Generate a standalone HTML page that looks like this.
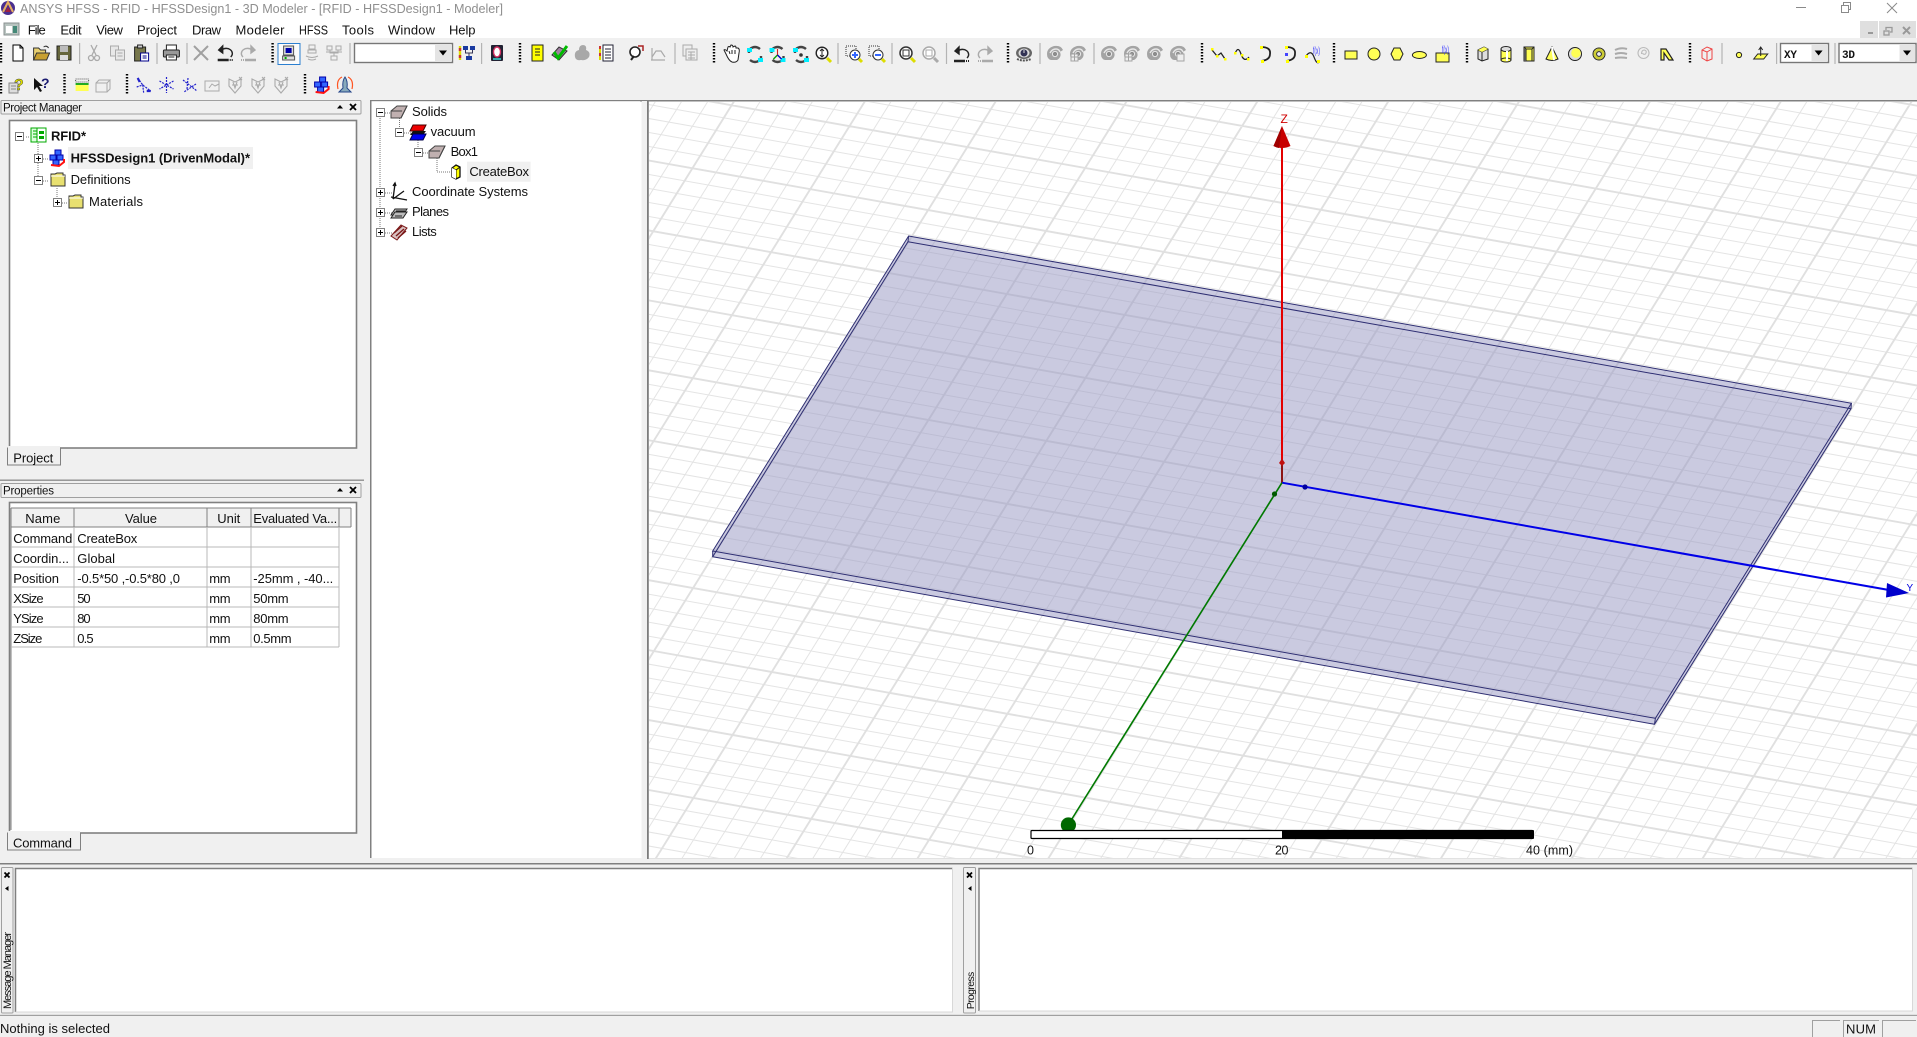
<!DOCTYPE html>
<html><head><meta charset="utf-8"><title>ANSYS HFSS</title>
<style>
html,body{margin:0;padding:0;background:#f0f0f0;overflow:hidden}
svg{display:block;position:absolute;left:0;top:0}
text{font-family:"Liberation Sans",Arial,sans-serif;font-size:13px;fill:#111}
.m{font-family:"Liberation Mono",monospace;font-size:12px;font-weight:bold}
.b{font-weight:bold}
.e{stroke:#808080;stroke-width:1;fill:#fff;shape-rendering:crispEdges}
.d{stroke:#777;stroke-width:1;stroke-dasharray:1 1;fill:none;shape-rendering:crispEdges}
</style></head><body>
<svg width="1917" height="1037" viewBox="0 0 1917 1037" xmlns="http://www.w3.org/2000/svg">
<defs>
<clipPath id="vp"><rect x="649" y="102" width="1268" height="756"/></clipPath>
<g id="new"><path d="M-5-8H2L5-5V8H-5Z" fill="#fff" stroke="#000"/><path d="M2-8V-5H5" fill="none" stroke="#000"/></g>
<g id="open" stroke="#333"><path d="M-8 7V-5H-3L-1-3H4V0" fill="#e8d070"/><path d="M-8 7L-5 0H8L5 7Z" fill="#c8a030"/><path d="M2-6Q5-8 7-5" fill="none"/></g>
<g id="save"><rect x="-7" y="-7" width="14" height="14" fill="#66663c" stroke="#222"/><rect x="-4" y="-7" width="8" height="6" fill="#bbb"/><rect x="-4" y="2" width="8" height="5" fill="#ddd"/></g>
<g id="cut" stroke="#aaa" fill="none" stroke-width="1.3"><path d="M-3-8L2 2M3-8L-2 2"/><circle cx="-3" cy="5" r="2.5"/><circle cx="3" cy="5" r="2.5"/></g>
<g id="copy" stroke="#aaa" fill="#e8e8e8"><rect x="-7" y="-7" width="8" height="10"/><rect x="-2" y="-3" width="9" height="10"/><path d="M0 0H5M0 3H5" fill="none"/></g>
<g id="paste"><rect x="-7" y="-6" width="11" height="14" fill="#77774c" stroke="#222"/><rect x="-4" y="-8" width="5" height="3" fill="#ccc" stroke="#222"/><rect x="-1" y="0" width="8" height="8" fill="#fff" stroke="#00008b"/><path d="M1 3H5M1 5H5" stroke="#00008b"/></g>
<g id="print" stroke="#222"><path d="M-5-3V-8H5V-3" fill="#fff"/><rect x="-8" y="-3" width="16" height="7" rx="1" fill="#999"/><rect x="-5" y="2" width="10" height="5" fill="#fff"/><path d="M-3 4H3" /></g>
<g id="del"><path d="M-7-7L7 7M7-7L-7 7" stroke="#a0a0a0" stroke-width="2"/></g>
<g id="undo" fill="none" stroke="#222" stroke-width="1.4"><path d="M-4-3A6 5 0 1 1 5 4"/><path d="M-7-3L-3-7V0Z" fill="#222"/><path d="M-8 7H3" stroke-width="2.5"/><path d="M4 7H8" stroke-dasharray="1 1" stroke-width="2"/></g>
<g id="redo" fill="none" stroke="#aaa" stroke-width="1.4"><path d="M4-3A6 5 0 1 0-5 4"/><path d="M7-3L3-7V0Z" fill="#aaa"/><path d="M8 7H-3" stroke-width="2.5"/><path d="M-4 7H-8" stroke-dasharray="1 1" stroke-width="2"/></g>
<g id="comp"><rect x="-5" y="-7" width="10" height="9" fill="#ddd" stroke="#555"/><rect x="-3" y="-5" width="6" height="5" fill="#0000a8"/><rect x="-6" y="3" width="12" height="4" fill="#ddd" stroke="#555"/><rect x="-4" y="4" width="2" height="2" fill="#0a0"/></g>
<g id="net1" fill="none" stroke="#aaa"><rect x="-3" y="-8" width="6" height="4"/><rect x="-4" y="-3" width="8" height="3"/><path d="M-6 3Q0 6 6 3M-4 6Q0 8 4 6"/></g>
<g id="net2" fill="none" stroke="#aaa"><rect x="-7" y="-7" width="5" height="4"/><rect x="2" y="-7" width="5" height="4"/><rect x="-3" y="3" width="6" height="4"/><path d="M-4-3V0H4V-3M0 0V3M-8-1H8"/></g>
<g id="tree"><path d="M-7-7V7" stroke="#dd0" stroke-width="2.4"/><path d="M-7-5V-2M-7 2V5" stroke="#c33" stroke-width="2.4"/><rect x="-4" y="-7" width="5" height="4" fill="#1a3aa0"/><rect x="3" y="-7" width="5" height="4" fill="#1a3aa0"/><path d="M-1.500-3V0H5.500V-3M2 0V3" fill="none" stroke="#335"/><rect x="-1" y="3" width="6" height="4" fill="#1a3aa0"/></g>
<g id="q"><rect x="-6" y="-8" width="12" height="16" fill="#223" rx="1"/><ellipse cx="0" cy="-1" rx="3.500" ry="5" fill="#fff" stroke="#d03060" stroke-width="1.400"/><rect x="-4" y="5" width="8" height="2" fill="#3aa"/></g>
<g id="ydoc"><rect x="-5" y="-8" width="11" height="16" fill="#ff0" stroke="#222"/><path d="M-2-4H3M-2-1H3M-2 2H3" stroke="#222"/></g>
<g id="check"><path d="M-7 2L0-6 8-2 0 7Z" fill="#a080a0" stroke="#333"/><path d="M-5-1L-1 5 8-7" fill="none" stroke="#0b0" stroke-width="3"/></g>
<g id="blob"><path d="M-7 4Q-8-2-3-3Q-3-8 1-8Q5-8 4-3Q9-1 7 4Q4 8-1 7Q-6 8-7 4Z" fill="#a8a8a8"/></g>
<g id="doc2"><rect x="-3" y="-8" width="10" height="16" fill="#fff" stroke="#223"/><path d="M-1-4H5M-1-1H5M-1 2H5M-1 5H5" stroke="#223"/><path d="M-6-7V7" stroke="#dd0" stroke-width="2"/><path d="M-6-7V-4M-6 0V3" stroke="#c33" stroke-width="2"/></g>
<g id="mag"><circle cx="-1" cy="-2" r="5" fill="#fff" stroke="#222" stroke-width="1.600"/><path d="M-5 6L-2 2" stroke="#222" stroke-width="2"/><path d="M2-8H7V-3" fill="none" stroke="#a22" stroke-width="1.500"/></g>
<g id="curve" fill="none" stroke="#aaa"><path d="M-7 6H7M-6 6V-6M-6 3L-2-3 3-3 7 3" stroke-width="1.200"/></g>
<g id="calc" stroke="#aaa" fill="#eee"><rect x="-7" y="-8" width="9" height="11"/><rect x="-4" y="-4" width="11" height="11"/><path d="M-2-1H5M-2 2H5M-2 5H5M1-1V7" fill="none"/></g>
<g id="hand"><path d="M-6 0L-8-4Q-7-5-5-3L-4-7Q-3-8-2-7L-1-9Q1-9 1-7L3-8Q4-8 4-6L6-6Q8-5 7-1L6 6Q4 9 0 8Q-3 7-6 0Z" fill="#fff" stroke="#222"/><path d="M-3-3L-2 0M0-4V0M3-4V0" stroke="#222"/></g>
<g id="rot" fill="none" stroke="#444" stroke-width="2.400"><path d="M-5-5Q0-9 5-5M-5 6Q0 10 5 6"/><path d="M-6-5V-1M6 6V2" stroke="#444"/><rect x="-8" y="-6" width="5" height="4" fill="#0ef" stroke="none"/><rect x="3" y="4" width="5" height="4" fill="#0ef" stroke="none"/></g>
<g id="rot2"><use href="#rot"/><path d="M0-5V1M0 1L-4 5M0 1L4 5" stroke="#c22" stroke-width="1.100" fill="none"/><path d="M-4 5L0 1" stroke="#0a0" stroke-width="1.300"/><path d="M4 5L0 1" stroke="#00c" stroke-width="1.300"/></g>
<g id="rot3"><use href="#rot"/><circle cx="0" cy="1" r="1.800" fill="#333"/></g>
<g id="zf"><circle cx="-1" cy="-1" r="5.800" fill="#fff" stroke="#222" stroke-width="1.400"/><path d="M-1-5V3M-3-3L-1-5 1-3M-3 1L-1 3 1 1" fill="none" stroke="#222"/><path d="M4 4L8 8" stroke="#dd0" stroke-width="3"/></g>
<g id="zi"><rect x="-8" y="-8" width="10" height="10" fill="none" stroke="#333" stroke-dasharray="1 1"/><circle cx="1" cy="1" r="5" fill="#fff" stroke="#333"/><path d="M-2 1H4M1-2V4" stroke="#36f" stroke-width="2"/><path d="M5 5L8 8" stroke="#dd0" stroke-width="3"/></g>
<g id="zo"><rect x="-8" y="-8" width="10" height="10" fill="none" stroke="#333" stroke-dasharray="1 1"/><circle cx="1" cy="1" r="5" fill="#fff" stroke="#333"/><path d="M-2 1H4" stroke="#36f" stroke-width="2"/><path d="M5 5L8 8" stroke="#dd0" stroke-width="3"/></g>
<g id="zq"><circle cx="-1" cy="-1" r="6" fill="#fff" stroke="#333" stroke-width="1.500"/><rect x="-4" y="-4" width="6" height="6" fill="none" stroke="#333"/><path d="M4 4L8 8" stroke="#dd0" stroke-width="3"/></g>
<g id="zq2"><circle cx="-1" cy="-1" r="6" fill="#fff" stroke="#aaa" stroke-width="1.500"/><rect x="-4" y="-4" width="6" height="6" fill="none" stroke="#aaa"/><path d="M4 4L8 8" stroke="#aaa" stroke-width="3"/></g>
<g id="eye"><ellipse cx="0" cy="-1" rx="8" ry="6" fill="#666"/><ellipse cx="0" cy="-1" rx="5.500" ry="4.500" fill="#ddd"/><circle cx="0" cy="-1" r="3.500" fill="#335"/><path d="M0-1V-4" stroke="#ddd"/><path d="M-7 5Q0 8 7 5" stroke="#555" stroke-width="2" stroke-dasharray="2 1" fill="none"/></g>
<g id="ge"><path d="M-8 1Q-8-5-1-7Q6-8 8-3L5-1Q7 4 2 7H-4Q-8 6-8 1Z" fill="#a4a4a4"/><path d="M-5 0Q-3-4 1-4Q4-4 5-1" fill="none" stroke="#e8e8e8" stroke-width="1.400"/><circle cx="0" cy="1" r="2.600" fill="#8c8c8c" stroke="#e8e8e8"/></g>
<g id="ge2"><use href="#ge"/><rect x="-7" y="1" width="7" height="7" fill="#eee" stroke="#a4a4a4"/><path d="M-7 4H0M-3.500 1V8" stroke="#a4a4a4"/></g>
<g id="ge3"><use href="#ge"/><rect x="-1" y="1" width="7" height="7" fill="#eee" stroke="#a4a4a4"/></g>
<g id="c1"><path d="M-7-4L-2 2 2-1 6 5" fill="none" stroke="#222" stroke-width="1.300"/><g fill="#ff0"><rect x="-8" y="-6" width="2.500" height="2.500"/><rect x="-3" y="1" width="2.500" height="2.500"/><rect x="5" y="4" width="2.500" height="2.500"/></g></g>
<g id="c2"><path d="M-7 0Q-4-9-1 0T7 3" fill="none" stroke="#222" stroke-width="1.300"/><g fill="#ff0"><rect x="-8" y="-2" width="2.500" height="2.500"/><rect x="-1" y="0" width="2.500" height="2.500"/><rect x="5" y="4" width="2.500" height="2.500"/></g></g>
<g id="c3"><path d="M-4-7Q6-7 5 0Q5 6-4 7" fill="none" stroke="#222" stroke-width="1.800"/><rect x="-5" y="-8" width="3" height="3" fill="#ff0"/><rect x="-4" y="6" width="3" height="3" fill="#ff0"/></g>
<g id="c4"><path d="M-4-7Q6-7 5 0Q5 6-4 7" fill="none" stroke="#222" stroke-width="1.800"/><rect x="-5" y="-1" width="3" height="3" fill="#44f"/><rect x="-5" y="-8" width="3" height="3" fill="#ff0"/><rect x="-4" y="6" width="3" height="3" fill="#ff0"/></g>
<g id="c5"><path d="M-7 1Q-2-6 1 2T6 7" fill="none" stroke="#222" stroke-width="1.200"/><rect x="-8" y="0" width="3" height="3" fill="#ff0"/><rect x="4" y="5" width="3" height="3" fill="#ff0"/><text x="0" y="-1" textLength="7" lengthAdjust="spacingAndGlyphs" style="font-size:10px;fill:#33f">f(x)</text></g>
<g id="s1"><rect x="-6" y="-4" width="12" height="8" fill="#ff5" stroke="#222"/></g>
<g id="s2"><circle r="6" fill="#ff5" stroke="#222"/></g>
<g id="s3"><path d="M-3-6H3L6 0 3 6H-3L-6 0Z" fill="#ff5" stroke="#222"/></g>
<g id="s4"><ellipse rx="7" ry="3.500" fill="#ff5" stroke="#222"/></g>
<g id="s5"><rect x="-7" y="-2" width="13" height="9" fill="#ff5" stroke="#222"/><text x="-1" y="-2" textLength="7" lengthAdjust="spacingAndGlyphs" style="font-size:10px;fill:#33f">f(x)</text></g>
<g id="b1"><path d="M-5-4L1-7 5-5V5L-1 7-5 5Z" fill="#ddd" stroke="#222"/><path d="M-5-4L-1-2 5-5M-1-2V7" fill="none" stroke="#222"/><path d="M-1-2L5-5 1-7-5-4Z" fill="#ff5"/></g>
<g id="b2"><rect x="-5" y="-5" width="10" height="11" fill="#ff5" stroke="#222"/><ellipse cy="-5" rx="5" ry="2.500" fill="#ddd" stroke="#222"/><ellipse cy="6" rx="5" ry="2" fill="#ff5" stroke="#222"/><path d="M1-3V7" stroke="#fff" stroke-width="2"/></g>
<g id="b3"><rect x="-5" y="-7" width="10" height="14" fill="#ff5" stroke="#222"/><path d="M-5-7L-3-5H3L5-7M-3-5V7M3-5V7" fill="none" stroke="#222"/><rect x="-5" y="-5" width="2" height="12" fill="#555"/></g>
<g id="b4"><path d="M0-7L6 5Q0 8-6 5Z" fill="#ff5" stroke="#222"/><path d="M0-7L2 6" stroke="#fff" stroke-width="2"/></g>
<g id="b5"><circle r="6.500" fill="#ddd" stroke="#222"/><circle cx="1" cy="-1" r="4.800" fill="#ff5"/></g>
<g id="b6"><circle r="6" fill="none" stroke="#222" stroke-width="1"/><circle r="4.200" fill="none" stroke="#cc3" stroke-width="2.600"/><circle r="2.400" fill="#eee" stroke="#222"/></g>
<g id="b7" fill="none" stroke="#aaa" stroke-width="2"><path d="M-6-4Q0-7 6-5M-6 0Q0-2 6 0M-6 4Q0 3 6 4"/></g>
<g id="b8" fill="none" stroke="#bbb" stroke-width="1.100"><circle r="5.500"/><path d="M-2 1Q-2-3 1-3Q4-2 2 1Q0 2-1 0"/></g>
<g id="b9"><path d="M-6 6V-5H-1L6 6H2L-3-1V6Z" fill="#ff5" stroke="#222" stroke-width="1.200"/></g>
<g id="rb" fill="none" stroke="#e44"><path d="M-5-4L0-7 5-5V5L0 7-5 4Z"/><path d="M-5-4L0-2 5-5M0-2V7"/></g>
<g id="dot"><circle r="2.600" fill="#ff5" stroke="#222"/></g>
<g id="pl"><path d="M-7 5L-3 0H7L3 5Z" fill="#ff5" stroke="#222"/><path d="M0-7V2M-3 0H3M-2-4L0-7 2-4" fill="none" stroke="#222"/></g>
<g id="hlp"><rect x="-8" y="-2" width="9" height="10" fill="#ddd" stroke="#888"/><path d="M-6 1H-1M-6 4H-1" stroke="#888"/><text x="-3" y="5" style="font-size:16px;font-weight:bold;fill:#dd0;stroke:#333;stroke-width:.4">?</text></g>
<g id="whats"><path d="M-7-7L-7 5-4 2-1 7 1 6-2 1 2 1Z" fill="#111"/><text x="0" y="3" style="font-size:14px;font-weight:bold;fill:#1a1a70">?</text></g>
<g id="ybox"><rect x="-6" y="-6" width="13" height="3" fill="none" stroke="#555" stroke-dasharray="1 1"/><rect x="-6" y="-2" width="13" height="2" fill="#2a2"/><rect x="-6" y="0" width="13" height="6" fill="#ff5"/></g>
<g id="gbox" fill="none" stroke="#aaa"><rect x="-7" y="-2" width="11" height="9"/><path d="M-7-2L-4-5H7L4-2M7-5V4L4 7"/></g>
<g id="ax" fill="none" stroke="#22c" stroke-width="1.200"><path d="M-6-7L-1 0 7 6M-7 2L-1 0 0 8" stroke-dasharray="2 1"/><path d="M-6-7L-4-3M7 6H3" stroke-width="2.200"/></g>
<g id="ax2" fill="none" stroke="#22c" stroke-width="1.200"><path d="M0-8V8M-7-4L7 4M7-4L-7 4" stroke-dasharray="2 1"/></g>
<g id="ax3" fill="none" stroke="#22c" stroke-width="1.200"><path d="M-7-5L7 6M-2-7L-3 4M6-1L-6 7" stroke-dasharray="2 1"/></g>
<g id="gax" fill="none" stroke="#aaa"><rect x="-7" y="-4" width="14" height="10"/><path d="M-3 3L0-1 3 1 7-1"/></g>
<g id="gs" fill="none" stroke="#aaa" stroke-width="1.100"><path d="M-6-6L0-3 6-6V1L0 8-6 1Z"/><path d="M-2-3L0 3 2-3M-3 0H3"/><path d="M4-8L7-5M7-8L4-5"/></g>
<g id="hf"><g stroke="#00a" fill="#36f"><rect x="-2" y="-8" width="6" height="5"/><rect x="-7" y="-3" width="6" height="5"/><rect x="0" y="-3" width="6" height="5"/><rect x="-4" y="2" width="6" height="5"/></g><path d="M-6 7L2 8 7 4V1" stroke="#f11" stroke-width="2" fill="none"/></g>
<g id="rocket"><path d="M-7 4Q-9-5-3-8M7 4Q9-5 3-8" fill="none" stroke="#f52" stroke-width="1.200"/><path d="M0-8Q3-4 2 3L6 7H-6L-2 3Q-3-4 0-8Z" fill="#8ab" stroke="#248"/></g>
<g id="rfid"><rect x="-7" y="-7" width="8" height="14" fill="#dfd" stroke="#0a0"/><rect x="-1" y="-7" width="9" height="14" fill="#fff" stroke="#0a0"/><rect x="1" y="-4" width="5" height="3" fill="#0a0"/><rect x="1" y="1" width="5" height="3" fill="#0a0"/><path d="M-5-4H-1M-5-1H-1M-5 2H-1" stroke="#0a0"/></g>
<g id="fold"><path d="M-7 7V-5H-3L-1-6H5V-4H7V7Z" fill="#e8e070" stroke="#333"/><path d="M-7-3H7" stroke="#fff"/></g>
<g id="sld"><path d="M-8 6V-1L-2-6H8L2 6Z" fill="#c0b0b0" stroke="#444"/><path d="M-8-1H3M3-1V-1" fill="none" stroke="#444"/><path d="M-8 6H2L8-6" fill="none" stroke="#444"/></g>
<g id="vac"><path d="M-8-1L-5-7H8L5-1Z" fill="#e00" stroke="#400"/><path d="M-8 3H5L8-1V-1H-5Z" fill="#111"/><path d="M-8 8L-5 2H8L5 8Z" fill="#00e" stroke="#004"/></g>
<g id="cb"><path d="M-4-4L0-7 4-5V5L0 7-4 5Z" fill="#ff0" stroke="#111" stroke-width="1.300"/><path d="M-4-4L0-2 4-5M0-2V7" fill="none" stroke="#111"/><path d="M-4-4V5L0 7V-2Z" fill="#fff"/></g>
<g id="cs" fill="none" stroke="#111" stroke-width="1.300"><path d="M-6 7L-4-8M-8 5L8 8M-6 7L5-1"/><path d="M-6-6L-4-9-3-6" /></g>
<g id="pln" fill="#bbb" stroke="#222"><path d="M-8 3L-4-3H8L4 3Z"/><path d="M-8 6L-4 0H8L4 6Z"/><path d="M-3-1H6M-4 4H3" stroke="#222"/></g>
<g id="lst" stroke="#7a1818" fill="#d8c0c0"><path d="M-8 4L2-7 8-4-2 8Z"/><path d="M-5 1L3-6M-3 4L5-3M-1 6L7-1" fill="none" stroke-width="1.400"/></g>
<g id="tri"><path d="M-4-2.500H4L0 2.500Z" fill="#000"/></g>
<g id="upx"><path d="M-3 1.500H3L0-2Z" fill="#000"/><path d="M10-3L16 3M16-3L10 3" stroke="#000" stroke-width="1.800"/></g>
</defs>

<rect width="1917" height="1037" fill="#f0f0f0"/>
<rect width="1917" height="38" fill="#fff"/>

<!-- title bar -->
<g><circle cx="8" cy="8" r="7" fill="#4a2f8f"/><path d="M3 12L8 2 13 12" fill="none" stroke="#e8b060" stroke-width="2"/><path d="M5 12L8 7 11 12" fill="#a02040"/></g>
<text x="20" y="13" textLength="483" lengthAdjust="spacingAndGlyphs" style="fill:#8f8f8f">ANSYS HFSS - RFID - HFSSDesign1 - 3D Modeler - [RFID - HFSSDesign1 - Modeler]</text>
<path d="M1796 7.500H1806" stroke="#8a8a8a" stroke-width="1"/>
<g fill="none" stroke="#8a8a8a"><rect x="1841.500" y="5.500" width="7" height="7" fill="#fff"/><path d="M1843.500 5V2.500H1850.500V9.500H1848.500"/></g>
<path d="M1887 3L1897 13M1897 3L1887 13" stroke="#8a8a8a" stroke-width="1"/>
<rect x="1860" y="21" width="18" height="17" fill="#dfdfdf"/><rect x="1879" y="21" width="18" height="17" fill="#dfdfdf"/><rect x="1897" y="21" width="19" height="17" fill="#dfdfdf"/>
<path d="M1868 33H1873" stroke="#999" stroke-width="2"/>
<g fill="none" stroke="#999" stroke-width="1.300"><rect x="1884" y="31" width="5" height="4"/><path d="M1886 30V27.500H1892V32H1890"/></g>
<path d="M1903 27L1910 34M1910 27L1903 34" stroke="#999" stroke-width="2"/>

<!-- menu -->
<g><rect x="4" y="23" width="15" height="12" fill="#b8c4c0" stroke="#8a9090"/><rect x="6" y="26" width="6" height="7" fill="#fff"/><rect x="13" y="26" width="4" height="7" fill="#487"/></g>
<g style="fill:#222">
<text x="27.700" y="34.300" textLength="18">File</text>
<text x="60.400" y="34.300" textLength="21.200">Edit</text>
<text x="96.300" y="34.300" textLength="26.600">View</text>
<text x="137" y="34.300" textLength="40">Project</text>
<text x="192" y="34.300" textLength="29">Draw</text>
<text x="235.500" y="34.300" textLength="49">Modeler</text>
<text x="299" y="34.300" textLength="29" lengthAdjust="spacingAndGlyphs">HFSS</text>
<text x="342" y="34.300" textLength="32">Tools</text>
<text x="388" y="34.300" textLength="47">Window</text>
<text x="449" y="34.300" textLength="26.500">Help</text>
</g>

<!-- toolbar grips -->
<g stroke="#000" stroke-width="2.400" stroke-dasharray="1.500 1.500" fill="none">
<path d="M1 43V63M272.600 43V63M520 43V63M714 43V63M1008 43V63M1202 43V63M1334 43V63M1467 43V63M1690 43V63"/>
<path d="M1 74V94M64.500 74V94M127 74V94M305 74V94"/>
</g>
<g stroke="#b4b4b4" stroke-width="1.200"><path d="M79.600 43V64M157 43V64M187 43V64M350 43V64M481.600 43V64M675 43V64M838 43V64M892 43V64M946.500 43V64M1040 43V64M1094 43V64M1722 43V64M1776.600 43V64M1835 43V64"/></g>

<!-- toolbar row 1 -->
<rect x="278" y="43.500" width="22" height="21" fill="#fbfbfb" stroke="#2b7fd0" stroke-width="1"/>
<use href="#new" x="18" y="53"/><use href="#open" x="41.600" y="53"/><use href="#save" x="64" y="53"/><use href="#cut" x="94" y="53"/><use href="#copy" x="117.500" y="53"/><use href="#paste" x="141.600" y="53"/><use href="#print" x="171.400" y="53"/><use href="#del" x="201" y="53"/><use href="#undo" x="225.700" y="53"/><use href="#redo" x="248" y="53"/>
<use href="#comp" x="288.600" y="53"/><use href="#net1" x="312" y="53"/><use href="#net2" x="334" y="53"/>
<rect x="354.500" y="43.500" width="98" height="19" fill="#fff" stroke="#777" stroke-width="1.400"/><rect x="435" y="45" width="17" height="16" fill="#e4e4e4"/><use href="#tri" x="443" y="53"/>
<use href="#tree" x="467" y="53"/><use href="#q" x="497" y="53"/><use href="#ydoc" x="537" y="53"/><use href="#check" x="559" y="53"/><use href="#blob" x="582" y="53"/><use href="#doc2" x="606" y="53"/><use href="#mag" x="636" y="54"/>
<use href="#curve" x="658" y="54"/><use href="#calc" x="690" y="53"/><use href="#hand" x="732" y="54"/><use href="#rot" x="755" y="54"/><use href="#rot2" x="777.500" y="54"/><use href="#rot3" x="801" y="54"/><use href="#zf" x="823" y="54"/>
<use href="#zi" x="854" y="54"/><use href="#zo" x="877" y="54"/><use href="#zq" x="907" y="54"/><use href="#zq2" x="930" y="54"/><use href="#undo" x="962" y="54"/><use href="#redo" x="985" y="54"/><use href="#eye" x="1024" y="54"/>
<use href="#ge" x="1055" y="53"/><use href="#ge2" x="1078" y="53"/><use href="#ge" x="1109" y="53"/><use href="#ge2" x="1132" y="53"/><use href="#ge" x="1155" y="53"/><use href="#ge3" x="1178" y="53"/>
<use href="#c1" x="1219" y="54"/><use href="#c2" x="1242" y="54"/><use href="#c3" x="1265" y="54"/><use href="#c4" x="1290" y="54"/><use href="#c5" x="1313" y="55"/>
<use href="#s1" x="1351" y="55"/><use href="#s2" x="1374" y="54"/><use href="#s3" x="1397" y="54"/><use href="#s4" x="1419.400" y="55"/><use href="#s5" x="1443" y="55"/>
<use href="#b1" x="1483" y="54"/><use href="#b2" x="1506" y="54"/><use href="#b3" x="1529" y="54"/><use href="#b4" x="1552" y="54"/><use href="#b5" x="1575" y="54"/><use href="#b6" x="1599" y="54"/><use href="#b7" x="1621" y="54"/><use href="#b8" x="1643.500" y="53"/><use href="#b9" x="1667" y="54"/>
<use href="#rb" x="1707" y="54"/><use href="#dot" x="1739" y="55"/><use href="#pl" x="1760.700" y="54"/>
<rect x="1780.500" y="43.500" width="48" height="19" fill="#fff" stroke="#777" stroke-width="1.400"/><rect x="1811.500" y="45" width="16.500" height="16" fill="#e4e4e4"/><use href="#tri" x="1818.600" y="53"/>
<text class="m" x="1784" y="58" textLength="13" style="font-size:11px">XY</text>
<rect x="1839" y="43.500" width="77" height="19" fill="#fff" stroke="#777" stroke-width="1.400"/><rect x="1899.500" y="45" width="16" height="16" fill="#e4e4e4"/><use href="#tri" x="1907" y="53"/>
<text class="m" x="1842" y="58" textLength="13" style="font-size:11px">3D</text>

<!-- toolbar row 2 -->
<use href="#hlp" x="17" y="85"/><use href="#whats" x="41" y="85"/><use href="#ybox" x="81.600" y="85"/><use href="#gbox" x="103" y="85"/><use href="#ax" x="143.700" y="85"/><use href="#ax2" x="166.500" y="85"/><use href="#ax3" x="190" y="85"/><use href="#gax" x="212" y="85"/><use href="#gs" x="235" y="85"/><use href="#gs" x="258" y="85"/><use href="#gs" x="281" y="85"/><use href="#hf" x="321.600" y="85"/><use href="#rocket" x="345" y="85"/>

<!-- project manager -->
<rect x="1" y="100.500" width="360" height="13.500" rx="1" fill="#f0f0f0" stroke="#a0a0a0"/>
<text x="3" y="111.500" textLength="79" style="font-size:11.500px">Project Manager</text>
<use href="#upx" x="340" y="107"/>
<rect x="9.500" y="120.500" width="347" height="327.500" fill="#fff" stroke="#808080" stroke-width="1.600"/>
<rect x="68" y="147" width="185" height="22" fill="#f0f0f0"/>
<path class="d" d="M38 143V180M57 188V204M26 137H30M43 159H48M43 181H49M62 203H67"/>
<rect class="e" x="15.500" y="132.500" width="8" height="8"/><path d="M17 136.500H22" stroke="#000"/>
<use href="#rfid" x="38" y="135"/>
<text class="b" x="51" y="140.300" textLength="35">RFID*</text>
<rect class="e" x="34.500" y="154.500" width="8" height="8"/><path d="M36 158.500H41M38.500 156V161" stroke="#000"/>
<use href="#hf" x="57" y="158"/>
<text class="b" x="70.600" y="162.300" textLength="179.400">HFSSDesign1 (DrivenModal)*</text>
<rect class="e" x="34.500" y="176.500" width="8" height="8"/><path d="M36 180.500H41" stroke="#000"/>
<use href="#fold" x="58" y="179"/>
<text x="70.600" y="184" textLength="60">Definitions</text>
<rect class="e" x="53.500" y="198.500" width="8" height="8"/><path d="M55 202.500H60M57.500 200V205" stroke="#000"/>
<use href="#fold" x="76" y="201"/>
<text x="89" y="206" textLength="54">Materials</text>
<rect x="7.500" y="448" width="53" height="17" fill="#f0f0f0" stroke="#808080"/><rect x="8" y="446" width="52" height="3" fill="#f0f0f0"/>
<text x="13.300" y="462.300" textLength="40">Project</text>

<!-- properties -->
<rect x="0" y="479.500" width="364" height="1.400" fill="#909090"/>
<rect x="1" y="483.500" width="360" height="14" rx="1" fill="#f0f0f0" stroke="#a0a0a0"/>
<text x="3" y="494.500" textLength="51" style="font-size:11.500px">Properties</text>
<use href="#upx" x="340" y="490"/>
<rect x="9.500" y="502.500" width="347" height="330.500" fill="#fff" stroke="#808080" stroke-width="1.600"/>
<rect x="11" y="508" width="340" height="19" fill="#f0f0f0"/>
<g stroke="#808080" stroke-width="1" shape-rendering="crispEdges"><path d="M11 508H351M11 508V830M74 508V527M207 508V527M251 508V527M339 508V527M351 508V527M11 527H351"/></g>
<g stroke="#b8b8b8" stroke-width="1" shape-rendering="crispEdges"><path d="M74 527V647M207 527V647M251 527V647M339 527V647M11 547H339M11 567H339M11 587H339M11 607H339M11 627H339M11 647H339"/></g>
<g transform="translate(0 -.4)">
<text x="25.300" y="523.300" textLength="35">Name</text><text x="125" y="523.300" textLength="32">Value</text><text x="217.300" y="523.300" textLength="23">Unit</text><text x="253.300" y="523.300" textLength="84">Evaluated Va...</text>
<text x="13.300" y="543.300" textLength="59">Command</text><text x="77.300" y="543.300" textLength="60">CreateBox</text>
<text x="13.300" y="563.300" textLength="55.700">Coordin...</text><text x="77.300" y="563.300" textLength="37.700">Global</text>
<text x="13.300" y="583.300" textLength="45.700">Position</text><text x="77.300" y="583.300" textLength="102.700">-0.5*50 ,-0.5*80 ,0</text><text x="209.300" y="583.300" textLength="21.300">mm</text><text x="253.300" y="583.300" textLength="80">-25mm , -40...</text>
<text x="13.300" y="603.300" textLength="30.300">XSize</text><text x="77.300" y="603.300" textLength="13.300">50</text><text x="209.300" y="603.300" textLength="21.300">mm</text><text x="253.300" y="603.300" textLength="35.300">50mm</text>
<text x="13.300" y="623.300" textLength="30.300">YSize</text><text x="77.300" y="623.300" textLength="13.300">80</text><text x="209.300" y="623.300" textLength="21.300">mm</text><text x="253.300" y="623.300" textLength="35.300">80mm</text>
<text x="13.300" y="643.300" textLength="29">ZSize</text><text x="77.300" y="643.300" textLength="16.300">0.5</text><text x="209.300" y="643.300" textLength="21.300">mm</text><text x="253.300" y="643.300" textLength="38.300">0.5mm</text>
</g>
<rect x="7.500" y="833" width="73" height="17" fill="#f0f0f0" stroke="#808080"/><rect x="8" y="831" width="72" height="3" fill="#f0f0f0"/>
<text x="13" y="847.500" textLength="59">Command</text>

<!-- tree panel -->
<rect x="371.500" y="100.500" width="270" height="757.500" fill="#fff"/>
<rect x="370" y="100" width="1.500" height="758" fill="#808080"/><rect x="370" y="100" width="272" height="1.200" fill="#808080"/>
<rect x="467" y="161.700" width="63.600" height="20" fill="#f0f0f0"/>
<path class="d" d="M380 118V227M399.500 118V128M418 138V148M437 158V172H451M385 113H392M404 133H411M423 153H430M385 193H392M385 213H392M385 233H392"/>
<rect class="e" x="376.500" y="108.500" width="8" height="8"/><path d="M378 112.500H383" stroke="#000"/>
<use href="#sld" x="399" y="112"/><text x="412" y="116" textLength="35">Solids</text>
<rect class="e" x="395.500" y="128.500" width="8" height="8"/><path d="M397 132.500H402" stroke="#000"/>
<use href="#vac" x="418" y="132"/><text x="430.600" y="136.200" textLength="45">vacuum</text>
<rect class="e" x="414.500" y="148.500" width="8" height="8"/><path d="M416 152.500H421" stroke="#000"/>
<use href="#sld" x="437" y="152"/><text x="450.600" y="156" textLength="27.400">Box1</text>
<use href="#cb" x="456" y="172"/><text x="469.400" y="176.200" textLength="59.600">CreateBox</text>
<rect class="e" x="376.500" y="188.500" width="8" height="8"/><path d="M378 192.500H383M380.500 190V195" stroke="#000"/>
<use href="#cs" x="399" y="192"/><text x="412" y="196.200" textLength="116">Coordinate Systems</text>
<rect class="e" x="376.500" y="208.500" width="8" height="8"/><path d="M378 212.500H383M380.500 210V215" stroke="#000"/>
<use href="#pln" x="399" y="212"/><text x="412" y="216.200" textLength="37">Planes</text>
<rect class="e" x="376.500" y="228.500" width="8" height="8"/><path d="M378 232.500H383M380.500 230V235" stroke="#000"/>
<use href="#lst" x="399" y="232"/><text x="412" y="236.200" textLength="24.700">Lists</text>

<!-- 3D viewport -->
<rect x="648" y="101" width="1269" height="758" fill="#fff"/>
<g clip-path="url(#vp)">
<g transform="matrix(11.785 2.091 -3.918 6.3 1282 482.7)" fill="none">
<path vector-effect="non-scaling-stroke" stroke="#e4e4e4" stroke-width="1" d="M-68-72V72M-66-72V72M-64-72V72M-62-72V72M-58-72V72M-56-72V72M-54-72V72M-52-72V72M-48-72V72M-46-72V72M-44-72V72M-42-72V72M-38-72V72M-36-72V72M-34-72V72M-32-72V72M-28-72V72M-26-72V72M-24-72V72M-22-72V72M-18-72V72M-16-72V72M-14-72V72M-12-72V72M-8-72V72M-6-72V72M-4-72V72M-2-72V72M2-72V72M4-72V72M6-72V72M8-72V72M12-72V72M14-72V72M16-72V72M18-72V72M22-72V72M24-72V72M26-72V72M28-72V72M32-72V72M34-72V72M36-72V72M38-72V72M42-72V72M44-72V72M46-72V72M48-72V72M52-72V72M54-72V72M56-72V72M58-72V72M62-72V72M64-72V72M66-72V72M68-72V72"/>
<path vector-effect="non-scaling-stroke" stroke="#e4e4e4" stroke-width="1" d="M-68-72H68M-68-68H68M-68-66H68M-68-64H68M-68-62H68M-68-58H68M-68-56H68M-68-54H68M-68-52H68M-68-48H68M-68-46H68M-68-44H68M-68-42H68M-68-38H68M-68-36H68M-68-34H68M-68-32H68M-68-28H68M-68-26H68M-68-24H68M-68-22H68M-68-18H68M-68-16H68M-68-14H68M-68-12H68M-68-8H68M-68-6H68M-68-4H68M-68-2H68M-68 2H68M-68 4H68M-68 6H68M-68 8H68M-68 12H68M-68 14H68M-68 16H68M-68 18H68M-68 22H68M-68 24H68M-68 26H68M-68 28H68M-68 32H68M-68 34H68M-68 36H68M-68 38H68M-68 42H68M-68 44H68M-68 46H68M-68 48H68M-68 52H68M-68 54H68M-68 56H68M-68 58H68M-68 62H68M-68 64H68M-68 66H68M-68 68H68M-68 72H68"/>
<path vector-effect="non-scaling-stroke" stroke="#e0e0e0" stroke-width="1.900" d="M-60-72V72M-50-72V72M-40-72V72M-30-72V72M-20-72V72M-10-72V72M0-72V72M10-72V72M20-72V72M30-72V72M40-72V72M50-72V72M60-72V72M-68-70H68M-68-60H68M-68-50H68M-68-40H68M-68-30H68M-68-20H68M-68-10H68M-68 0H68M-68 10H68M-68 20H68M-68 30H68M-68 40H68M-68 50H68M-68 60H68M-68 70H68"/>
</g>
<polygon points="908.6,236 1851.4,403.3 1851,408.7 1654.5,724.3 712.7,556.7 712.7,551" fill="#9696c2" fill-opacity=".5"/>
<g fill="none" stroke="#2e2e72" stroke-width="1">
<polygon points="908.6,236 1851.4,403.3 1655.4,718.3 712.7,551"/>
<polygon points="908,241.7 1851,408.7 1654.5,724.3 712.7,556.7"/>
<path d="M908.6 236L908 241.7M1851.4 403.3L1851 408.7M1655.4 718.3L1654.5 724.3M712.7 551V556.7"/>
</g>
<path d="M1282 147V463" stroke="#e40000" stroke-width="2"/>
<path d="M1282 463V483" stroke="#8c1414" stroke-width="2"/>
<path d="M1282 458.500L1285 463 1282 466 1279 463Z" fill="#c01010"/>
<path d="M1282 126L1273.500 146Q1282 150 1290.500 146Z" fill="#c80000"/>
<path d="M1282 126L1273.500 146Q1276 147.500 1279 148Z" fill="#a00000"/>
<text x="1280.500" y="123" style="font-size:12px;fill:#d00000">Z</text>
<path d="M1282 482.700L1889 590" stroke="#0000e8" stroke-width="2"/>
<circle cx="1305" cy="487" r="2.600" fill="#0000a0"/>
<path d="M1909 593L1887 583 1886 597.500Z" fill="#0000cc"/>
<text x="1906.500" y="591" style="font-size:10px;fill:#0000e0">Y</text>
<path d="M1282 482.700L1070 822" stroke="#007a00" stroke-width="1.600"/>
<circle cx="1274.500" cy="494" r="2.600" fill="#005a00"/>
<circle cx="1068.400" cy="825" r="7.600" fill="#006800"/>
</g>
<rect x="647" y="101" width="1.800" height="758" fill="#7c7c7c"/>
<rect x="640" y="100" width="1277" height="1.500" fill="#808080"/>
<rect x="642" y="101" width="5" height="758" fill="#f0f0f0"/>
<rect x="649" y="858" width="1268" height="1" fill="#e2e2e2"/>
<rect x="1031" y="830.500" width="502" height="8" rx="1" fill="#fff" stroke="#000" stroke-width="1.200"/>
<rect x="1282" y="830" width="252" height="9" rx="1" fill="#000"/>
<text x="1027" y="854.500" textLength="7" style="font-size:12.500px">0</text>
<text x="1275" y="854.500" textLength="13.500" style="font-size:12.500px">20</text>
<text x="1526" y="854.500" textLength="47" style="font-size:12.500px">40 (mm)</text>

<!-- bottom panels -->
<rect x="0" y="863" width="1917" height="1.500" fill="#808080"/>
<rect x="1.500" y="867.500" width="11.500" height="145.500" rx="1" fill="#f0f0f0" stroke="#a0a0a0"/>
<path d="M4.500 872.500L9.500 877.500M9.500 872.500L4.500 877.500" stroke="#000" stroke-width="1.800"/>
<path d="M5 888.500L8.500 886V891Z" fill="#000"/>
<text transform="translate(11 1009) rotate(-90)" textLength="77" style="font-size:11px">Message Manager</text>
<rect x="15.500" y="868" width="937" height="144" fill="#fff"/>
<path d="M15.500 1012V868.500H952.500" fill="none" stroke="#808080" stroke-width="1.500"/>
<path d="M15.500 1012H952.500V868" fill="none" stroke="#d8d8d8" stroke-width="1"/>
<rect x="963.500" y="867.500" width="12" height="145.500" rx="1" fill="#f0f0f0" stroke="#a0a0a0"/>
<path d="M967 872.500L972 877.500M972 872.500L967 877.500" stroke="#000" stroke-width="1.800"/>
<path d="M968 888.500L971.500 886V891Z" fill="#000"/>
<text transform="translate(974 1009.300) rotate(-90)" textLength="37.600" style="font-size:10.500px">Progress</text>
<rect x="979" y="868" width="933" height="143" fill="#fff"/>
<path d="M979 1011V868.500H1912.500" fill="none" stroke="#808080" stroke-width="1.500"/>
<path d="M979 1011H1912.500V868" fill="none" stroke="#d8d8d8" stroke-width="1"/>
<rect x="0" y="1014.800" width="1917" height="1.200" fill="#a0a0a0"/>
<text x="0" y="1033" textLength="110">Nothing is selected</text>
<g fill="none" stroke="#a0a0a0" stroke-width="1"><path d="M1812.500 1037V1020.500H1840M1843.500 1037V1020.500H1879M1882.500 1037V1020.500H1916"/></g>
<text x="1846" y="1033.500" textLength="30">NUM</text>
</svg>
</body></html>
